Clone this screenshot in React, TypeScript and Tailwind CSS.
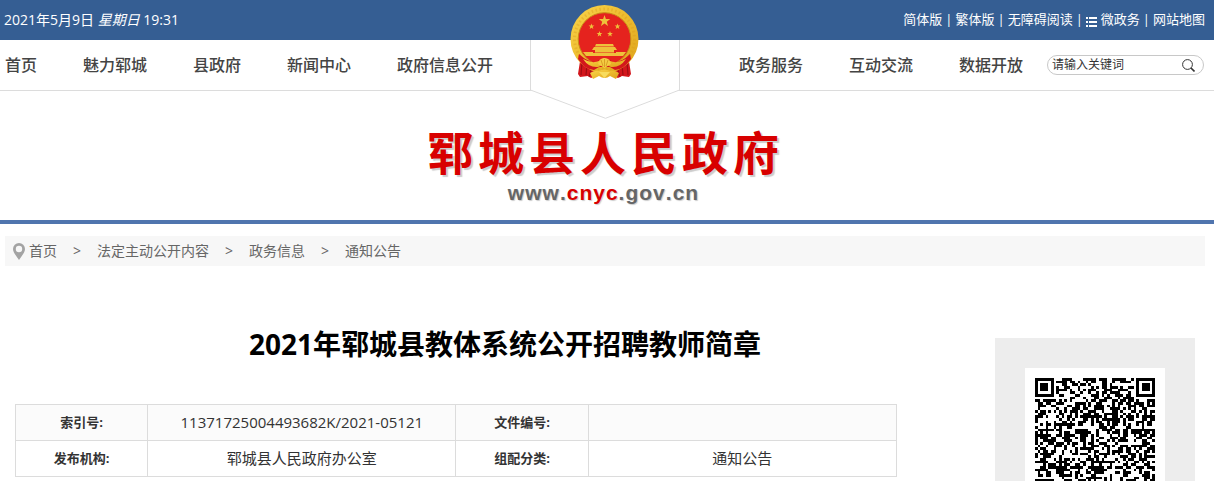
import { ReactNode } from "react";

const leftNav = ["首页", "魅力郓城", "县政府", "新闻中心", "政府信息公开"];
const rightNav = ["政务服务", "互动交流", "数据开放"];
const crumbs = ["首页", "法定主动公开内容", "政务信息", "通知公告"];
const siteName = "郓城县人民政府";

const infoRows = [
  ["索引号:", "11371725004493682K/2021-05121", "文件编号:", ""],
  ["发布机构:", "郓城县人民政府办公室", "组配分类:", "通知公告"]
];

const STAR =
  "M0-6 1.4-1.9 5.7-1.9 2.3.7 3.5 4.9 0 2.4-3.5 4.9-2.3.7-5.7-1.9-1.4-1.9Z";

function Emblem() {
  return (
    <svg
      aria-hidden="true"
      className="absolute left-10 -top-[35px] h-[75px] w-[69px]"
      viewBox="0 0 69 75"
    >
      <defs>
        <linearGradient id="gold" x1="0" y1="0" x2="1" y2="1">
          <stop offset="0" stopColor="#f9d54c" />
          <stop offset="0.5" stopColor="#edbb2e" />
          <stop offset="1" stopColor="#dda21c" />
        </linearGradient>
      </defs>
      <path
        d="M11 50 8 69l2 3 8-1 3 2 5-2h17l5 2 4-2 7 1 2-3-3-19-9 8H20Z"
        fill="#d3161c"
      />
      <path
        d="M12 57l-1 13M17 60l-1 10M57 57l1 13M52 60l1 10M22 62l-3 10M47 62l3 10"
        stroke="#9f0d13"
        strokeWidth="1.2"
      />
      <circle cx="34.5" cy="34" r="34" fill="url(#gold)" />
      <circle
        cx="34.5"
        cy="34"
        r="30"
        fill="none"
        stroke="#d99c1a"
        strokeDasharray="1.5 2.5"
        strokeOpacity="0.4"
        strokeWidth="3"
      />
      <circle cx="34.5" cy="34" r="26.3" fill="#e5231e" stroke="#c98a18" />
      <g fill="#eec13b">
        <path d={STAR} transform="translate(34.5 16)" />
        <path d={STAR} transform="translate(21.5 21.5) scale(.52)" />
        <path d={STAR} transform="translate(47.5 21.5) scale(.52)" />
        <path d={STAR} transform="translate(29.5 29) scale(.52)" />
        <path d={STAR} transform="translate(40 29) scale(.52)" />
        <path d="M26 39h17l1 2.5H25ZM24 42h21l2 3H22ZM25 45h19v2.5H25ZM23 48h23v2H23ZM13 47h10v3h23v-3h10l-3 4H16Z" />
      </g>
      <path
        d="M9 49q10 9 17 8l4-3h9l4 3q8 1 17-8l1 5q-8 11-16 11l-5-3H29l-5 3Q15 65 8 54Z"
        fill="#d3161c"
      />
      <path
        d="M13 54q9 5 16 2l5-3 6 3q7 3 16-2-6 9-15 8l-6-3-7 3q-9 1-15-8Z"
        fill="url(#gold)"
      />
      <path d="M28 59q1-6 6.5-6t6.5 6l-6.5 4Z" fill="#f4cb42" />
      <path
        d="M34.5 54v8M31 55l2 6M38 55l-2 6"
        stroke="#cf8c19"
        strokeWidth="0.7"
      />
      <path
        d="M20 68q5-3 9-2 5-3 11 0 5-1 9 2l-3 6-6-3q-5 4-11 0l-6 3Z"
        fill="url(#gold)"
      />
      <path d="M29 67l11 0-5.5 6Z" fill="#f8dc5d" />
    </svg>
  );
}

const QR_SIZE = 45;

function inFinder(x: number, y: number) {
  const last = QR_SIZE - 8;
  return (x < 8 && y < 8) || (x >= last && y < 8) || (x < 8 && y >= last);
}

function QrCode() {
  let seed = 20217;
  let cells = "";
  for (let y = 0; y < QR_SIZE; y++) {
    for (let x = 0; x < QR_SIZE; x++) {
      seed = (seed * 1103515245 + 12345) % 2147483648;
      if (!inFinder(x, y) && (seed >> 16) % 100 < 51) {
        cells += `M${x} ${y}h1v1h-1z`;
      }
    }
  }
  const finders = [
    [0, 0],
    [QR_SIZE - 7, 0],
    [0, QR_SIZE - 7]
  ];
  return (
    <svg
      role="img"
      aria-label="二维码"
      className="block h-[120px] w-[120px]"
      viewBox={`0 0 ${QR_SIZE} ${QR_SIZE}`}
      shapeRendering="crispEdges"
    >
      <path d={cells} />
      {finders.map(([x, y]) => (
        <path
          key={`${x}-${y}`}
          d="M0 0h7v7h-7zM1 1v5h5v-5zM2 2h3v3h-3z"
          fillRule="evenodd"
          transform={`translate(${x} ${y})`}
        />
      ))}
    </svg>
  );
}

function TopLink({ children }: { children: ReactNode }) {
  return (
    <a href="#" className="flex items-center gap-1">
      {children}
    </a>
  );
}

function TopBar() {
  return (
    <div className="bg-[#355e93] text-white">
      <div className="mr-[9px] ml-1 flex h-10 items-center justify-between">
        <p className="text-sm">
          2021年5月9日 <em>星期日</em> 19:31
        </p>
        <div className="flex items-center gap-[3px] text-[13px]">
          <TopLink>简体版</TopLink>
          <span>|</span>
          <TopLink>繁体版</TopLink>
          <span>|</span>
          <TopLink>无障碍阅读</TopLink>
          <span>|</span>
          <TopLink>
            <svg
              aria-hidden="true"
              className="mt-1 h-[11px] w-[11px]"
              viewBox="0 0 11 11"
              fill="#fff"
              shapeRendering="crispEdges"
            >
              <path d="M0 0h2v2H0zM3 0h8v2H3zM0 4h2v2H0zM3 4h8v2H3zM0 8h2v2H0zM3 8h8v2H3z" />
            </svg>
            微政务
          </TopLink>
          <span>|</span>
          <TopLink>网站地图</TopLink>
        </div>
      </div>
    </div>
  );
}

function NavLinks({ items }: { items: string[] }) {
  return (
    <ul className="flex gap-[46px] text-base font-medium whitespace-nowrap text-[#444]">
      {items.map((item) => (
        <li key={item}>
          <a href="#">{item}</a>
        </li>
      ))}
    </ul>
  );
}

function SearchBox() {
  return (
    <form className="flex h-5 w-[157px] items-center rounded-full border border-[#c8c8c8] pr-2 pl-1">
      <input
        type="text"
        aria-label="站内搜索"
        placeholder="请输入关键词"
        className="min-w-0 flex-1 bg-transparent text-xs text-[#333] outline-none placeholder:text-[#333]"
      />
      <button type="button" aria-label="搜索">
        <svg
          className="block h-[13px] w-[13px]"
          viewBox="0 0 13 13"
          fill="none"
          stroke="#333"
        >
          <circle cx="5.5" cy="5.5" r="4.9" />
          <path d="M9 9l3.5 3.5" strokeWidth="1.6" />
        </svg>
      </button>
    </form>
  );
}

function MainNav() {
  return (
    <nav className="border-b border-[#dcdcdc]">
      <div className="mr-[9px] ml-[5px] grid h-[50px] grid-cols-[1fr_150px_1fr] items-center">
        <NavLinks items={leftNav} />
        <div className="relative h-full">
          <svg
            aria-hidden="true"
            className="absolute top-0 left-0 h-[79px] w-[150px]"
            viewBox="0 0 150 79"
          >
            <path
              d="M.5 0V50L75.5 78.3 149.5 50V0"
              fill="#fff"
              stroke="#dcdcdc"
            />
          </svg>
          <Emblem />
        </div>
        <div className="flex items-center justify-end gap-6 pr-px">
          <NavLinks items={rightNav} />
          <SearchBox />
        </div>
      </div>
    </nav>
  );
}

function Spaced({ text }: { text: string }) {
  return [...text].map((char, i) => <span key={i}>{char}</span>);
}

function Banner() {
  return (
    <div className="flex h-[133px] flex-col items-center border-b-4 border-[#5075ae] pt-[35px] pr-2">
      <h2 className="flex gap-[5px] text-[46px] leading-[52px] font-bold text-[#d80000] [text-shadow:2px_2px_1px_#ccc]">
        <Spaced text={siteName} />
      </h2>
      <p className="flex gap-px font-['Liberation_Sans',Arial,sans-serif] text-[21px] leading-[30px] font-bold text-[#666] [text-shadow:1px_1px_1px_#ccc]">
        <Spaced text="www." />
        <span className="flex gap-px text-[#d80000]">
          <Spaced text="cnyc" />
        </span>
        <Spaced text=".gov.cn" />
      </p>
    </div>
  );
}

function Breadcrumb() {
  return (
    <nav
      aria-label="当前位置"
      className="mt-3 mr-[9px] ml-[5px] flex h-[30px] items-center bg-[#f7f7f7] pl-2 text-sm text-[#666]"
    >
      <svg
        aria-hidden="true"
        className="mr-1 h-[17px] w-3"
        viewBox="0 0 12 17"
        fill="#a3a3a3"
      >
        <path
          fillRule="evenodd"
          d="M6 0a6 6 0 0 1 6 6c0 3.5-3.5 7-6 11C3.5 13 0 9.5 0 6a6 6 0 0 1 6-6Zm0 2.8a3.2 3.2 0 1 0 0 6.4 3.2 3.2 0 0 0 0-6.4Z"
        />
      </svg>
      <ol className="flex">
        {crumbs.map((crumb, i) => (
          <li key={crumb} className="flex">
            {i > 0 && <span className="px-4">&gt;</span>}
            <a href="#">{crumb}</a>
          </li>
        ))}
      </ol>
    </nav>
  );
}

function InfoTable() {
  return (
    <table className="w-[90%] table-fixed border-collapse text-center text-[15px] text-[#333]">
      <colgroup>
        <col className="w-[15%]" />
        <col className="w-[35%]" />
        <col className="w-[15%]" />
        <col className="w-[35%]" />
      </colgroup>
      <tbody>
        {infoRows.map(([label, value, label2, value2]) => (
          <tr key={label} className="h-9 odd:bg-[#fbfbfb]">
            <th className="border border-[#dcdcdc] text-[13px] font-bold">
              {label}
            </th>
            <td className="border border-[#dcdcdc]">{value}</td>
            <th className="border border-[#dcdcdc] text-[13px] font-bold">
              {label2}
            </th>
            <td className="border border-[#dcdcdc]">{value2}</td>
          </tr>
        ))}
      </tbody>
    </table>
  );
}

export default function App() {
  return (
    <div className="h-screen overflow-hidden bg-white font-['Open_Sans','Noto_Sans_CJK_SC',sans-serif]">
      <header>
        <TopBar />
        <MainNav />
        <Banner />
      </header>
      <Breadcrumb />
      <main className="mr-[19px] ml-[15px] flex items-start">
        <article className="flex-1 pt-14">
          <h1 className="mb-[38px] text-center text-[28px] leading-11 font-bold text-black">
            2021年郓城县教体系统公开招聘教师简章
          </h1>
          <InfoTable />
        </article>
        <aside className="mt-[72px] w-[200px] bg-[#ededed] p-[30px]">
          <div className="bg-white p-2.5">
            <QrCode />
          </div>
        </aside>
      </main>
    </div>
  );
}
